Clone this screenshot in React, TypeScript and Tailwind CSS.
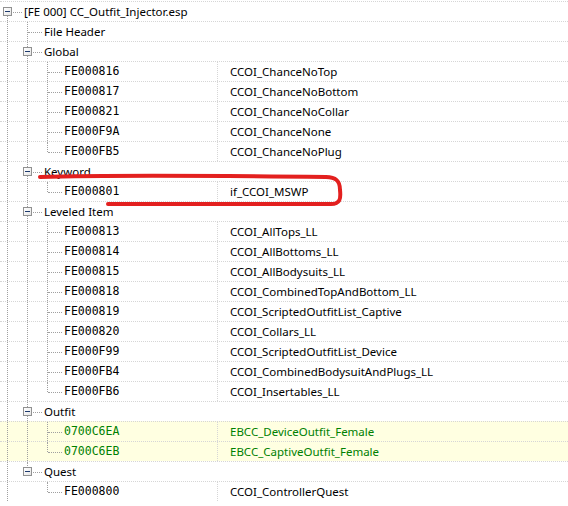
import React from "react";

type TreeNode = {
  label: string;
  value?: string;
  hl?: boolean;
  children?: TreeNode[];
};

type FlatRow = {
  level: number;
  label: string;
  value?: string;
  hl?: boolean;
  expandable: boolean;
  guides: boolean[];
  first: boolean;
  last: boolean;
};

const leaf = (label: string, value: string, hl = false): TreeNode => ({ label, value, hl });

const plugin: TreeNode = {
  label: "[FE 000] CC_Outfit_Injector.esp",
  children: [
    { label: "File Header" },
    {
      label: "Global",
      children: [
        leaf("FE000816", "CCOI_ChanceNoTop"),
        leaf("FE000817", "CCOI_ChanceNoBottom"),
        leaf("FE000821", "CCOI_ChanceNoCollar"),
        leaf("FE000F9A", "CCOI_ChanceNone"),
        leaf("FE000FB5", "CCOI_ChanceNoPlug"),
      ],
    },
    { label: "Keyword", children: [leaf("FE000801", "if_CCOI_MSWP")] },
    {
      label: "Leveled Item",
      children: [
        leaf("FE000813", "CCOI_AllTops_LL"),
        leaf("FE000814", "CCOI_AllBottoms_LL"),
        leaf("FE000815", "CCOI_AllBodysuits_LL"),
        leaf("FE000818", "CCOI_CombinedTopAndBottom_LL"),
        leaf("FE000819", "CCOI_ScriptedOutfitList_Captive"),
        leaf("FE000820", "CCOI_Collars_LL"),
        leaf("FE000F99", "CCOI_ScriptedOutfitList_Device"),
        leaf("FE000FB4", "CCOI_CombinedBodysuitAndPlugs_LL"),
        leaf("FE000FB6", "CCOI_Insertables_LL"),
      ],
    },
    {
      label: "Outfit",
      children: [
        leaf("0700C6EA", "EBCC_DeviceOutfit_Female", true),
        leaf("0700C6EB", "EBCC_CaptiveOutfit_Female", true),
      ],
    },
    { label: "Quest", children: [leaf("FE000800", "CCOI_ControllerQuest")] },
  ],
};

function flatten(node: TreeNode, level: number, guides: boolean[], first: boolean, last: boolean, out: FlatRow[]) {
  out.push({
    level,
    label: node.label,
    value: node.value,
    hl: node.hl,
    expandable: !!node.children,
    guides,
    first,
    last,
  });
  const kids = node.children ?? [];
  kids.forEach((k, i) => {
    flatten(k, level + 1, [...guides, !last], false, i === kids.length - 1, out);
  });
  return out;
}

// the plugin has more siblings below, so the root line keeps running
const rows = flatten(plugin, 0, [], true, false, []);

const dot = "border-dotted border-[#a0a0a0]";

function Connector({ row }: { row: FlatRow }) {
  return (
    <div className="relative h-full w-[22px] shrink-0">
      <span
        className={`absolute left-[7px] w-0 border-l ${dot} ${row.first ? "top-[10px]" : "top-0"} ${
          row.last ? "h-[10px]" : "bottom-0"
        }`}
      />
      <span className={`absolute left-[8px] right-0 top-[10px] h-0 border-t ${dot}`} />
      {row.expandable && (
        <span className="absolute left-[3px] top-[5px] flex size-[9px] items-center justify-center border border-[#919191] bg-gradient-to-br from-white to-[#e6e6e6]">
          <span className="h-px w-[5px] bg-[#1e3a6e]" />
        </span>
      )}
    </div>
  );
}

function Row({ row }: { row: FlatRow }) {
  const color = row.hl ? "text-[#008000]" : "text-black";
  return (
    <div
      className={`flex h-5 border-t border-dotted border-[#d6d6d6] ${row.hl ? "bg-[#ffffe1]" : ""}`}
    >
      <div className="flex h-full w-[217px] shrink-0">
        {row.guides.map((g, i) => (
          <div key={i} className="relative h-full w-5 shrink-0">
            {g && <span className={`absolute left-[7px] top-0 bottom-0 w-0 border-l ${dot}`} />}
          </div>
        ))}
        <Connector row={row} />
        {row.value ? (
          <span className={`ml-[2px] font-['DejaVu_Sans_Mono',monospace] text-[11.5px] leading-[19px] ${color}`}>
            {row.label}
          </span>
        ) : (
          <span className="ml-[2px] whitespace-nowrap font-['Noto_Sans',sans-serif] text-[11.5px] leading-[19px] text-black">
            {row.label}
          </span>
        )}
      </div>
      {row.value && (
        <div
          className={`flex-1 border-l border-dotted border-[#d6d6d6] pl-3 font-['Noto_Sans',sans-serif] text-[11.5px] leading-[19px] ${color}`}
        >
          {row.value}
        </div>
      )}
    </div>
  );
}

export default function App() {
  return (
    <div className="relative h-[506px] w-[568px] overflow-hidden bg-white pt-px">
      {rows.map((r, i) => (
        <Row key={i} row={r} />
      ))}
      {/* hand-drawn marker around the keyword record */}
      <svg
        className="pointer-events-none absolute left-0 top-0"
        width={568}
        height={506}
        viewBox="0 0 568 506"
      >
        <path
          d="M40 177 C 110 175, 240 176, 326 177 C 336 177, 340 181, 340 190 C 341 199, 340 204, 331 204 C 260 204, 170 204, 108 204"
          fill="none"
          stroke="#e3201f"
          strokeWidth={4}
          strokeLinecap="round"
          strokeLinejoin="round"
        />
      </svg>
    </div>
  );
}
